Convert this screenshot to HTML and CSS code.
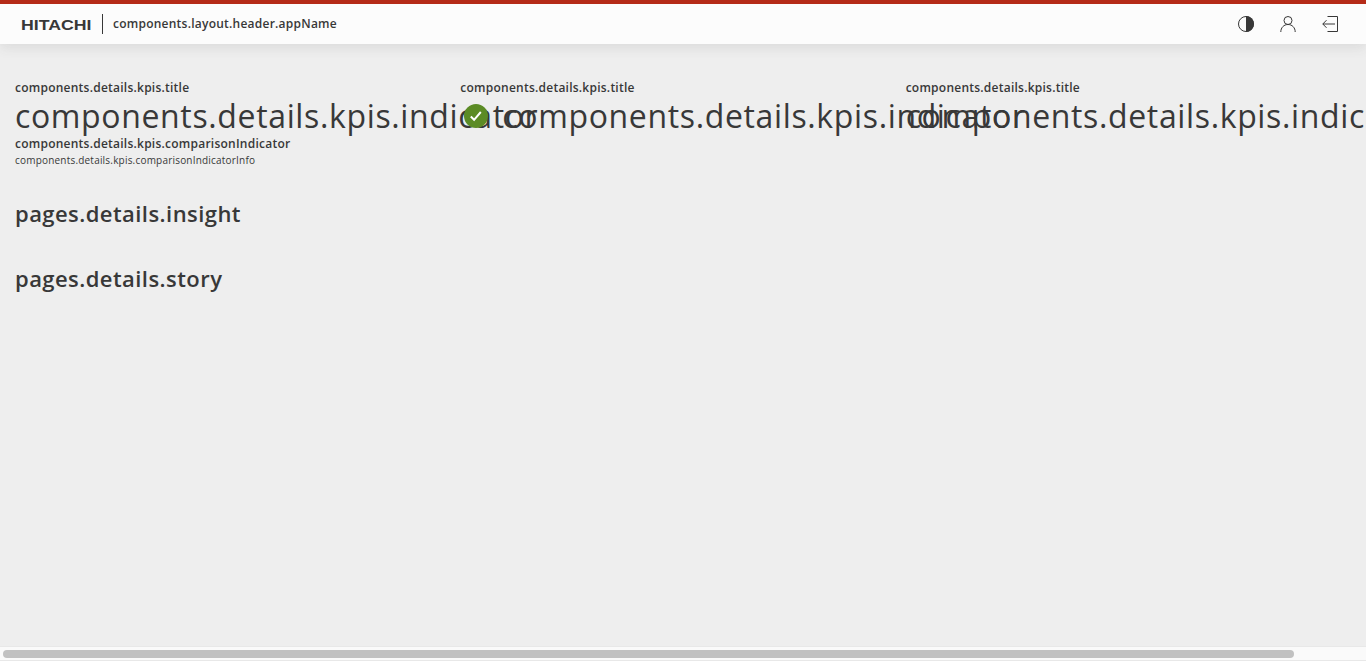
FILE: index.html
```
<!DOCTYPE html>
<html lang="en">
<head>
<meta charset="utf-8">
<title>Details</title>
<link rel="stylesheet" href="styles.css">
</head>
<body>
<header class="header">
  <svg class="brand" viewBox="0 0 81 20"><text class="brand-text" x="0" y="15.500" textLength="70.500" lengthAdjust="spacingAndGlyphs">HITACHI</text></svg>
  <span class="divider"></span>
  <span class="app-name">components.layout.header.appName</span>
  <nav class="actions">
    <svg class="icon" viewBox="0 0 16 16"><circle cx="8" cy="8" r="7.500" fill="none" stroke="#383838"/><path d="M8 0a8 8 0 0 1 0 16z" fill="#383838"/></svg>
    <svg class="icon" viewBox="0 0 16 16" fill="none" stroke="#383838"><circle cx="8" cy="4.500" r="4"/><path d="M.8 16c0-4.300 3-7.500 7.200-7.500s7.200 3.200 7.200 7.500"/></svg>
    <svg class="icon" viewBox="0 0 16 16" fill="none" stroke="#383838"><path d="M5.500.5h10v15h-10M.8 8H13M4.500 4.200L.8 8l3.700 3.800"/></svg>
  </nav>
</header>
<main class="content">
  <section class="kpis">
    <article class="kpi">
      <div class="kpi-title">components.details.kpis.title</div>
      <div class="kpi-value"><span>components.details.kpis.indicator</span></div>
      <div class="comparison">components.details.kpis.comparisonIndicator</div>
      <div class="comparison-info">components.details.kpis.comparisonIndicatorInfo</div>
    </article>
    <article class="kpi">
      <div class="kpi-title">components.details.kpis.title</div>
      <div class="kpi-value"><svg class="status" viewBox="0 0 32 32"><circle cx="16" cy="16" r="12" fill="#5b8b25"/><path d="M10.800 16.500l3.300 3.300 6.700-7.800" fill="none" stroke="#fff" stroke-width="2"/></svg><span>components.details.kpis.indicator</span></div>
    </article>
    <article class="kpi">
      <div class="kpi-title">components.details.kpis.title</div>
      <div class="kpi-value"><span>components.details.kpis.indicator</span></div>
    </article>
  </section>
  <h2 class="section-title">pages.details.insight</h2>
  <h2 class="section-title">pages.details.story</h2>
</main>
<div class="scrollbar"><div class="thumb"></div></div>
</body>
</html>
```
FILE: styles.css
```
* { box-sizing: border-box; }
body {
  margin: 0;
  height: 661px;
  overflow: hidden;
  display: flex;
  flex-direction: column;
  background: #eee;
  color: #383838;
  font-family: "Open Sans", sans-serif;
}
.header {
  height: 44px;
  flex: none;
  display: flex;
  align-items: center;
  padding: 0 28px 0 21px;
  border-top: 4px solid #b52b18;
  background: #fcfcfc;
  box-shadow: 0 3px 12px rgba(65, 65, 65, .12);
}
.brand { width: 81px; height: 20px; flex: none; }
.brand-text {
  font: bold 15px "Liberation Sans", sans-serif;
  fill: #383838;
}
.divider { width: 1px; height: 20px; background: #383838; }
.app-name {
  margin-left: 10px;
  padding-bottom: 2px;
  font-size: 12px;
  font-weight: 600;
  letter-spacing: .02em;
}
.actions { display: flex; gap: 26px; margin-left: auto; }
.icon { width: 16px; height: 16px; display: block; }
.content { flex: 1; min-height: 0; padding: 36px 15px 0; }
.kpis { display: grid; grid-template-columns: repeat(3, 445.33px); height: 117px; }
.kpi { min-width: 0; white-space: nowrap; }
.kpi-title, .comparison {
  font-size: 12px;
  line-height: 16px;
  font-weight: 600;
  letter-spacing: .02em;
}
.kpi-value {
  display: flex;
  align-items: center;
  height: 40px;
  font-size: 32px;
  line-height: 40px;
  letter-spacing: .02em;
}
.status { width: 32px; height: 32px; flex: none; margin-right: 10px; }
.comparison-info { font-size: 10px; line-height: 16px; letter-spacing: .02em; }
.section-title {
  margin: 0 0 33px;
  font-size: 22px;
  line-height: 32px;
  font-weight: 600;
  letter-spacing: .02em;
}
.scrollbar {
  flex: none;
  height: 15px;
  padding: 3px;
  border-top: 1px solid #e8e8e8;
  border-bottom: 1px solid #e8e8e8;
  background: #fafafa;
}
.thumb { width: 1291px; height: 8px; border-radius: 4px; background: #c1c1c1; }
```
